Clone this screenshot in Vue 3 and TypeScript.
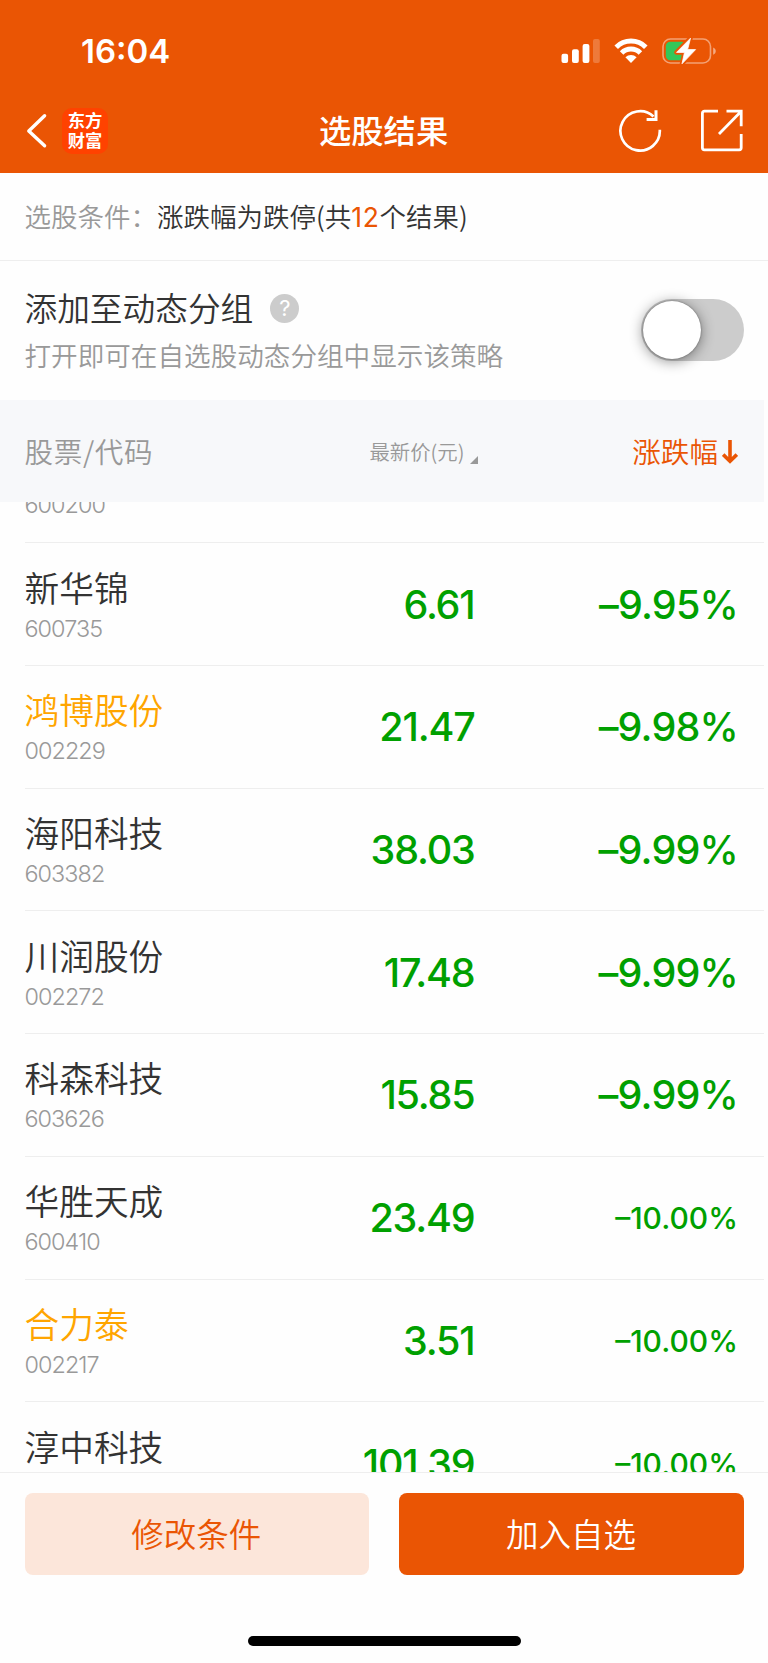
<script setup lang="ts">
interface Stock {
  name: string
  code: string
  price: string
  change: string
  held?: boolean
}

const stocks: Stock[] = [
  { name: '新华锦', code: '600735', price: '6.61', change: '–9.95%' },
  { name: '鸿博股份', code: '002229', price: '21.47', change: '–9.98%', held: true },
  { name: '海阳科技', code: '603382', price: '38.03', change: '–9.99%' },
  { name: '川润股份', code: '002272', price: '17.48', change: '–9.99%' },
  { name: '科森科技', code: '603626', price: '15.85', change: '–9.99%' },
  { name: '华胜天成', code: '600410', price: '23.49', change: '–10.00%' },
  { name: '合力泰', code: '002217', price: '3.51', change: '–10.00%', held: true },
  { name: '淳中科技', code: '', price: '101.39', change: '–10.00%' },
]
</script>

<template>
  <div class="screen">
    <header class="top">
      <div class="status">
        <span class="time">16:04</span>
        <svg class="status-icons" width="160" height="30" viewBox="0 0 160 30">
          <g fill="#fff">
            <rect x="1.5" y="17.7" width="6.6" height="9.3" rx="2" />
            <rect x="12" y="13.2" width="6.8" height="13.8" rx="2" />
            <rect x="22.6" y="8" width="6.8" height="19" rx="2" />
            <rect x="33" y="3" width="6.8" height="24" rx="2" opacity=".22" />
          </g>
          <g fill="none" stroke="#fff" stroke-width="5">
            <path d="M56.2 11.2a21 21 0 0 1 29.6 0" />
            <path d="M61.6 17a13.3 13.3 0 0 1 18.8 0" />
          </g>
          <path d="M65.4 21.2a8.2 8.2 0 0 1 11.2 0L71 27z" fill="#fff" />
          <rect x="103" y="3" width="47.5" height="24" rx="7.5" fill="none" stroke="#fff" stroke-opacity=".45" stroke-width="1.6" />
          <path d="M153.2 11.6c3.4 1.4 3.4 5.8 0 7.2z" fill="#fff" opacity=".5" />
          <rect x="105.8" y="5.8" width="20" height="18.4" rx="4.5" fill="#34c759" />
          <path d="M130.5 2.2L116.5 16.4h8L122 27.8 135.6 13.6h-8z" fill="#ea5504" stroke="#ea5504" stroke-width="4.5" stroke-linejoin="round" />
          <path d="M130.5 2.2L116.5 16.4h8L122 27.8 135.6 13.6h-8z" fill="#fff" stroke="#fff" stroke-width=".8" stroke-linejoin="round" />
        </svg>
      </div>
      <nav class="nav">
        <svg class="back" width="22" height="36" viewBox="0 0 22 36">
          <path d="M18.6 2.8L2.8 18l15.8 14.8" fill="none" stroke="#fff" stroke-width="3.4" stroke-linecap="round" stroke-linejoin="round" />
        </svg>
        <div class="logo"><span>东方</span><span>财富</span></div>
        <h1>选股结果</h1>
        <svg class="reload" width="44" height="44" viewBox="0 0 44 44">
          <g fill="none" stroke="#fff" stroke-width="2.7" stroke-linecap="butt">
            <path d="M41.8 20.8A19.7 19.7 0 1 1 35.5 7.4" />
            <path d="M38 1.2v9.4h-9.4" stroke-width="3" />
          </g>
        </svg>
        <svg class="share" width="44" height="44" viewBox="0 0 44 44">
          <g fill="none" stroke="#fff" stroke-width="2.8" stroke-linejoin="round">
            <path d="M18 2.2H4.4a2 2 0 0 0-2 2v34.6a2 2 0 0 0 2 2h34.8a2 2 0 0 0 2-2V25" />
            <path d="M26.5 2.2h14.7v15M40.5 3L19 25" stroke-linejoin="miter" />
          </g>
        </svg>
      </nav>
    </header>

    <section class="condition">
      <span class="label">选股条件：</span>
      <span class="value">涨跌幅为跌停(共<b>12</b>个结果)</span>
    </section>

    <section class="group">
      <div>
        <div class="group-title">
          <span>添加至动态分组</span>
          <i class="help">?</i>
        </div>
        <p>打开即可在自选股动态分组中显示该策略</p>
      </div>
      <div class="switch"><span class="knob" /></div>
    </section>

    <div class="thead">
      <span class="c-name">股票/代码</span>
      <span class="c-price">最新价(元)<svg width="8" height="8" viewBox="0 0 8 8"><path d="M8 0v8H0z" fill="#999" /></svg></span>
      <span class="c-change">涨跌幅<svg width="16" height="24" viewBox="0 0 16 24"><path d="M8 0v21M1.2 14.6L8 21.2l6.8-6.6" fill="none" stroke="#ea5504" stroke-width="3.6" /></svg></span>
    </div>

    <main class="list">
      <div class="partial"><span class="code">600200</span></div>
      <div v-for="s in stocks" :key="s.name" class="row">
        <div class="stock">
          <span class="name" :class="{ held: s.held }">{{ s.name }}</span>
          <span class="code">{{ s.code }}</span>
        </div>
        <span class="price">{{ s.price }}</span>
        <span class="change" :class="{ small: s.change.length > 6 }">{{ s.change }}</span>
      </div>
    </main>

    <footer class="actions">
      <button class="edit">修改条件</button>
      <button class="add">加入自选</button>
    </footer>
    <div class="home" />
  </div>
</template>

<style>
body {
  margin: 0;
  background: #fff;
}
</style>

<style scoped>
.screen {
  width: 768px;
  height: 1663px;
  display: flex;
  flex-direction: column;
  overflow: hidden;
  background: #fefefe;
  color: #333;
  font-family: "Noto Sans CJK SC", sans-serif;
  font-weight: 350;
}
.top {
  height: 173.4px;
  flex: none;
  background: #ea5504;
  color: #fff;
}
.status {
  height: 86px;
  display: flex;
  justify-content: space-between;
  box-sizing: border-box;
  padding: 36px 48px 0 81px;
}
.time {
  font: 600 33px/31px Inter, sans-serif;
}
.nav {
  height: 88px;
  display: flex;
  align-items: center;
  box-sizing: border-box;
  padding: 2px 24px 0 26px;
}
.logo {
  width: 46px;
  height: 46px;
  margin-left: 14px;
  border-radius: 10px;
  background: #ff4200;
  display: flex;
  flex-direction: column;
  align-items: center;
  justify-content: center;
  box-sizing: border-box;
  padding-bottom: 3px;
  font-size: 17.3px;
  font-weight: 700;
  line-height: 19.6px;
}
h1 {
  flex: 1;
  margin: -5px 0 0 211px;
  font-size: 32.3px;
  font-weight: 500;
  line-height: 46px;
  white-space: nowrap;
}
.share {
  margin-left: 38px;
}
.condition {
  height: 87.6px;
  flex: none;
  box-sizing: border-box;
  border-bottom: 1px solid #eee;
  padding: 0 24.5px 3px;
  display: flex;
  align-items: center;
  font-size: 26.5px;
}
.label {
  width: 132.5px;
  color: #999;
  white-space: nowrap;
}
.value b {
  font: 400 26.5px Inter, sans-serif;
  letter-spacing: 0.6px;
  color: #ea5504;
}
.group {
  height: 139.4px;
  flex: none;
  box-sizing: border-box;
  padding: 0 24.5px;
  display: flex;
  align-items: center;
  justify-content: space-between;
}
.group-title {
  display: flex;
  align-items: center;
  gap: 17px;
  font-size: 32.7px;
  line-height: 48px;
}
.help {
  width: 29px;
  height: 29px;
  margin-top: 2px;
  border-radius: 50%;
  background: #ccc;
  color: #fff;
  font: 400 22px/29px Inter, sans-serif;
  text-align: center;
}
.group p {
  margin: 0;
  font-size: 26.6px;
  line-height: 47px;
  color: #999;
}
.switch {
  width: 103px;
  height: 62px;
  margin-bottom: 2px;
  border-radius: 31px;
  background: #ccc;
  box-sizing: border-box;
  padding: 2px;
}
.knob {
  display: block;
  width: 58px;
  height: 58px;
  border-radius: 50%;
  background: #fff;
  box-shadow: 0 2px 14px rgba(0, 0, 0, 0.45), 0 0 2px rgba(0, 0, 0, 0.4);
}
.thead {
  width: 764px;
  height: 102px;
  flex: none;
  box-sizing: border-box;
  padding: 0 26px 2px 24.5px;
  background: #f7f8fa;
  color: #999;
  display: flex;
  align-items: center;
  font-size: 28.6px;
}
.c-name {
  width: 240px;
  letter-spacing: 0.6px;
}
.c-price {
  width: 213px;
  padding-top: 2px;
  text-align: right;
  font-size: 20.4px;
}
.c-price svg {
  margin: 0 0 -4px 5px;
}
.c-change {
  flex: 1;
  text-align: right;
  color: #ea5504;
}
.c-change svg {
  margin: 0 0 -1px 4px;
}
.list {
  width: 739.5px;
  height: 970px;
  flex: none;
  margin-left: 24.5px;
  overflow: hidden;
}
.partial {
  height: 40px;
  display: flex;
  align-items: flex-start;
}
.partial .code {
  margin-top: -13px;
}
.row {
  height: 122.7px;
  box-sizing: border-box;
  border-top: 1.5px solid #eee;
  display: flex;
  align-items: center;
}
.stock {
  width: 240px;
  display: flex;
  flex-direction: column;
  gap: 4px;
  padding-top: 1px;
}
.name {
  font-size: 34.7px;
  line-height: 44px;
}
.held {
  color: #ffa500;
}
.code {
  height: 32px;
  font: 350 23.4px/32px Inter, sans-serif;
  letter-spacing: -0.95px;
  color: #999;
}
.price,
.change {
  font: 500 39.5px/48px Inter, sans-serif;
  color: #00a000;
  text-align: right;
  padding-top: 1px;
}
.price {
  width: 210px;
  letter-spacing: -1.2px;
}
.change {
  flex: 1;
  padding-right: 26px;
  letter-spacing: -0.8px;
}
.small {
  font-size: 30px;
  letter-spacing: 0;
}
.actions {
  height: 104px;
  flex: none;
  box-sizing: border-box;
  border-top: 1px solid #eee;
  padding: 20px 24px 0 24.5px;
  display: flex;
  gap: 30px;
}
button {
  flex: 1;
  height: 82px;
  padding: 0 1px 2px 0;
  border: 0;
  border-radius: 8px;
  font: 350 32.5px/80px "Noto Sans CJK SC", sans-serif;
}
.edit {
  background: #fce6da;
  color: #ea5504;
}
.add {
  background: #ea5504;
  color: #fff;
}
.home {
  width: 273px;
  height: 10px;
  flex: none;
  margin: 60px 0 0 247.5px;
  border-radius: 5px;
  background: #000;
}
</style>
